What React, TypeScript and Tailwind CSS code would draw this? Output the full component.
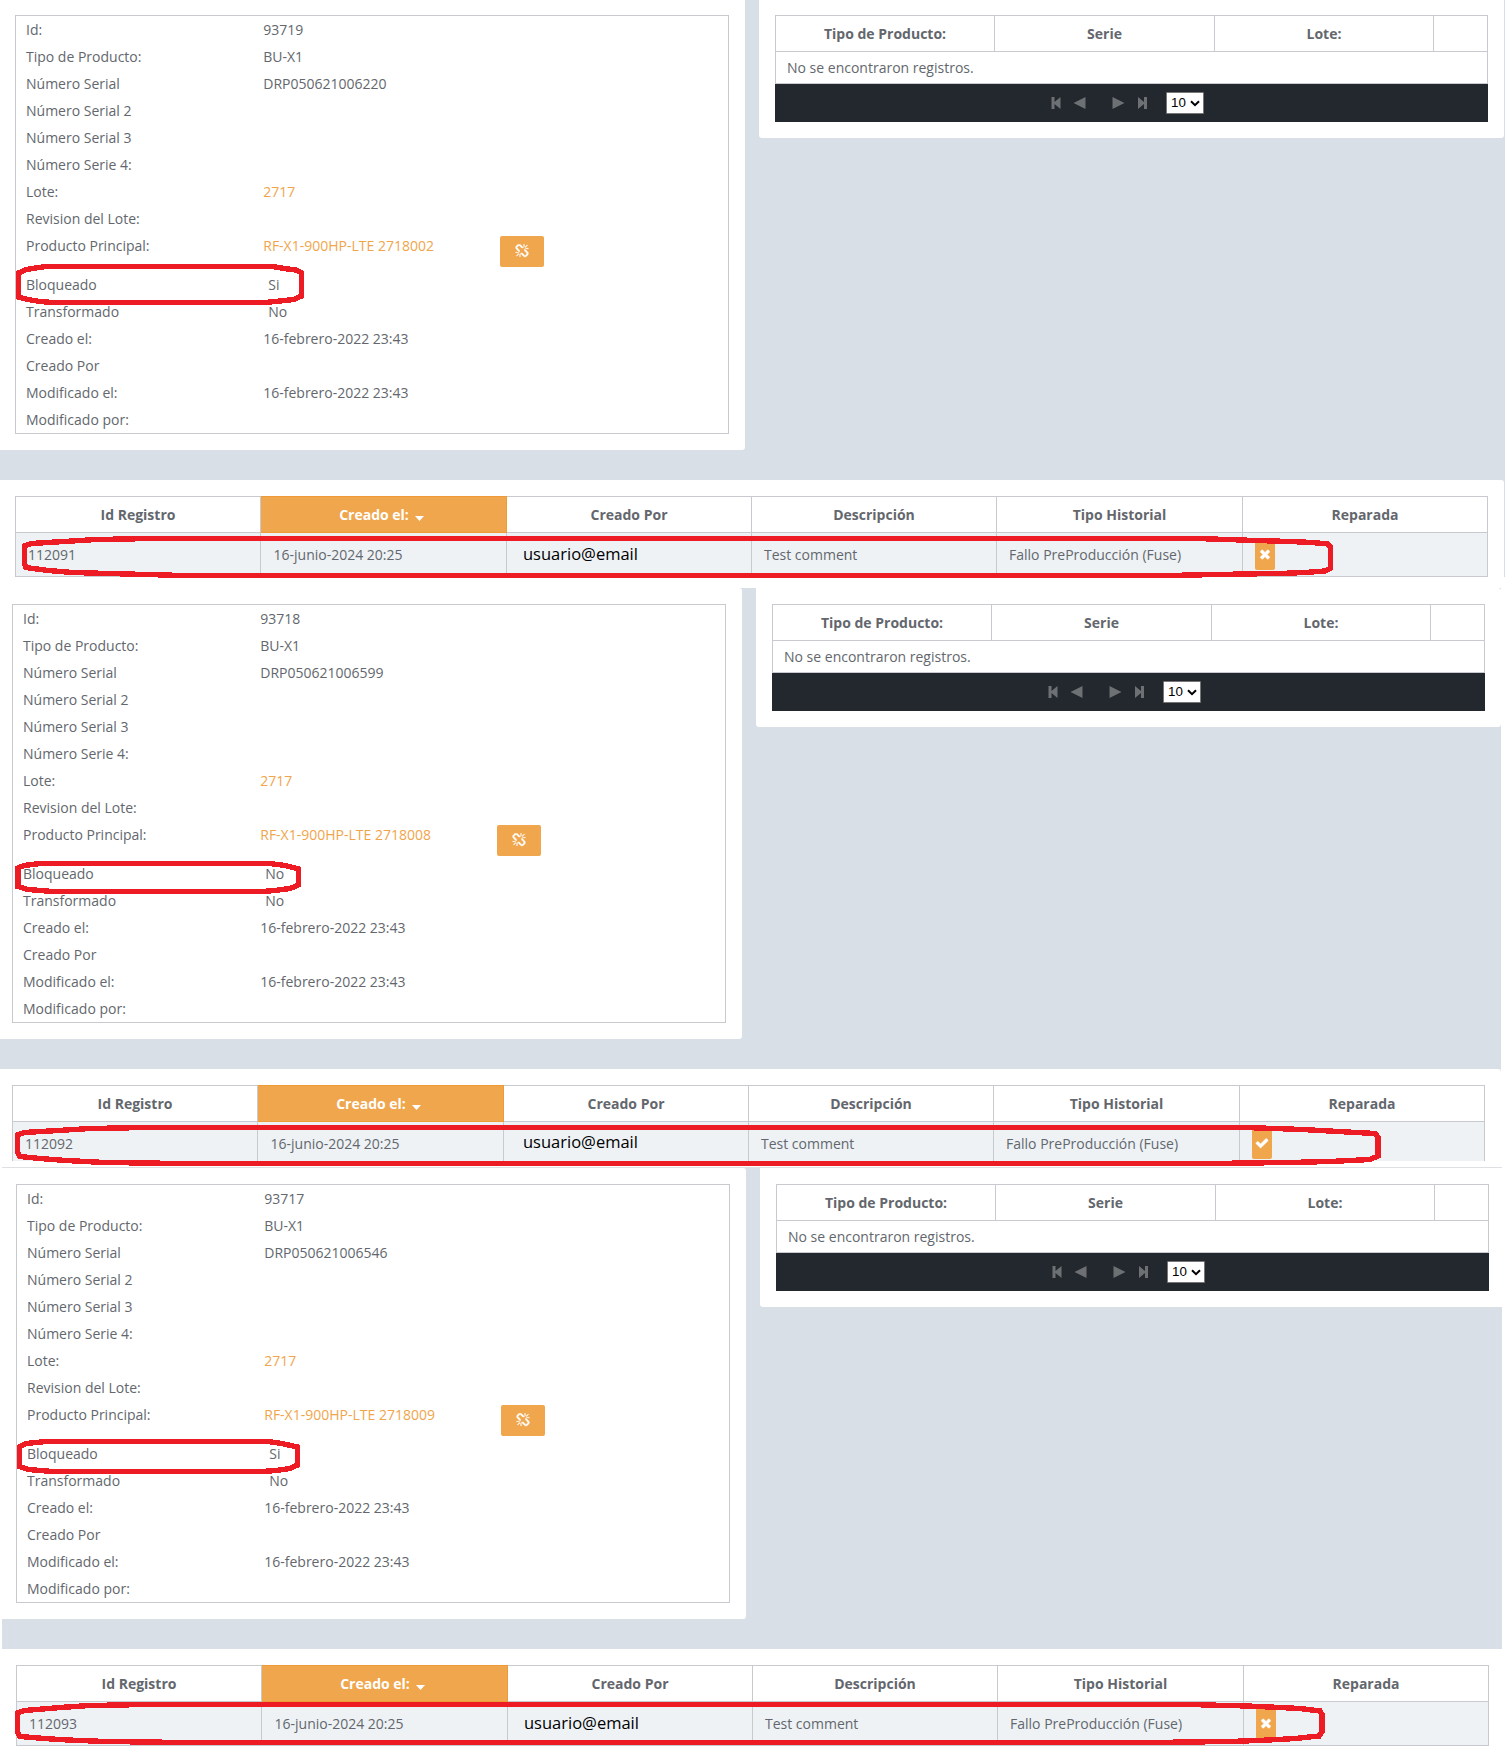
import React from "react";

type RecordData = {
  id: string;
  serial: string;
  product: string;
  blocked: string;
  historyId: string;
  repaired: boolean;
};

const first: RecordData = { id: "93719", serial: "DRP050621006220", product: "RF-X1-900HP-LTE 2718002", blocked: "Si", historyId: "112091", repaired: false };
const second: RecordData = { id: "93718", serial: "DRP050621006599", product: "RF-X1-900HP-LTE 2718008", blocked: "No", historyId: "112092", repaired: true };
const third: RecordData = { id: "93717", serial: "DRP050621006546", product: "RF-X1-900HP-LTE 2718009", blocked: "Si", historyId: "112093", repaired: false };

const TIMES =
  "M1490 1322q0 40-28 68l-136 136q-28 28-68 28t-68-28l-294-294-294 294q-28 28-68 28t-68-28l-136-136q-28-28-28-68t28-68l294-294-294-294q-28-28-28-68t28-68l136-136q28-28 68-28t68 28l294 294 294-294q28-28 68-28t68 28l136 136q28 28 28 68t-28 68l-294 294 294 294q28 28 28 68z";
const CHECK =
  "M1671 566q0 40-28 68l-724 724-136 136q-28 28-68 28t-68-28l-136-136-362-362q-28-28-28-68t28-68l136-136q28-28 68-28t68 28l294 295 656-657q28-28 68-28t68 28l136 136q28 28 28 68z";
const UNLINK =
  "M503 1271l-256 256q-10 9-23 9-12 0-23-9-9-10-9-23t9-23l256-256q10-9 23-9t23 9q9 10 9 23t-9 23zm169 41v320q0 14-9 23t-23 9-23-9-9-23v-320q0-14 9-23t23-9 23 9 9 23zm-224-224q0 14-9 23t-23 9h-320q-14 0-23-9t-9-23 9-23 23-9h320q14 0 23 9t9 23zm1264 128q0 120-85 203l-147 146q-83 83-203 83-121 0-204-85l-334-335q-21-21-42-56l239-18 273 274q28 28 68 28t68-27l147-146q28-28 28-67 0-40-28-68l-274-275 18-239q35 21 56 42l336 336q84 86 84 204zm-617-724l-239 18-273-274q-28-28-68-28-39 0-68 27l-147 146q-28 28-28 67 0 40 28 68l274 274-18 240q-35-21-56-42l-336-336q-84-86-84-204 0-120 85-203l147-146q83-83 203-83 121 0 204 85l334 335q21 21 42 56zm633 84q0 14-9 23t-23 9h-320q-14 0-23-9t-9-23 9-23 23-9h320q14 0 23 9t9 23zm-544-544v320q0 14-9 23t-23 9-23-9-9-23v-320q0-14 9-23t23-9 23 9 9 23zm407 151l-256 256q-11 9-23 9t-23-9q-9-10-9-23t9-23l256-256q10-9 23-9t23 9q9 10 9 23t-9 23z";

function Glyph({ d, bold = false }: { d: string; bold?: boolean }) {
  return (
    <svg viewBox="0 0 1792 1792" className={bold ? "block h-[14px] w-[14px] shrink-0 fill-white stroke-white stroke-[60px]" : "block h-[14px] w-[14px] shrink-0 fill-white"}>
      <path d={d} />
    </svg>
  );
}

function Field({ label, children, indent = false }: { label: string; children?: React.ReactNode; indent?: boolean }) {
  return (
    <div className="flex h-[27px]">
      <div className="w-[237.250px] shrink-0">{label}</div>
      <div className={indent ? "pl-[5px]" : ""}>{children}</div>
    </div>
  );
}

function Details({ r }: { r: RecordData }) {
  return (
    <div className="w-[745px] shrink-0 bg-white pb-[16px] pl-[15px] pt-[15px] rounded-br-[3px]">
      <div className="h-[419px] w-[714px] border border-[#c9cad0] pl-[10px] leading-[27px]">
        <Field label="Id:">{r.id}</Field>
        <Field label="Tipo de Producto:">BU-X1</Field>
        <Field label="Número Serial">{r.serial}</Field>
        <Field label="Número Serial 2" />
        <Field label="Número Serial 3" />
        <Field label="Número Serie 4:" />
        <Field label="Lote:"><span className="text-[#f0a54b]">2717</span></Field>
        <Field label="Revision del Lote:" />
        <div className="flex h-[39px]">
          <div className="w-[237.250px] shrink-0">Producto Principal:</div>
          <div className="w-[236.750px] shrink-0 text-[#f0a54b]">{r.product}</div>
          <button className="mt-[4px] flex h-[31px] w-[44px] items-center justify-center rounded-[2px] bg-[#f0a64d] pb-px">
            <Glyph d={UNLINK} bold />
          </button>
        </div>
        <Field label="Bloqueado" indent>{r.blocked}</Field>
        <Field label="Transformado" indent>No</Field>
        <Field label="Creado el:">16-febrero-2022 23:43</Field>
        <Field label="Creado Por" />
        <Field label="Modificado el:">16-febrero-2022 23:43</Field>
        <Field label="Modificado por:" />
      </div>
    </div>
  );
}

function Pager() {
  return (
    <div className="flex h-[38px] items-center bg-[#23272e] pl-[276px]">
      <svg viewBox="0 0 96 12" className="block h-[12px] w-[96px] fill-[#6e7174]">
        <path d="M0.500 0h3v5l6-5v12l-6-5v5h-3z" />
        <path d="M34.500 0v12l-12-6z" />
        <path d="M61.500 0v12l12-6z" />
        <path d="M96 0h-3v5l-6-5v12l6-5v5h3z" />
      </svg>
      <div className="ml-[19px] flex h-[22px] w-[38px] items-center rounded-[1px] border border-[#767676] bg-white pl-[4px] font-['Liberation_Sans',sans-serif] text-[13.330px] text-black">
        10
        <svg viewBox="0 0 10 7" className="ml-[4px] block h-[7px] w-[10px] shrink-0 fill-none stroke-black stroke-2">
          <path d="M1 1.200l4 4 4-4" />
        </svg>
      </div>
    </div>
  );
}

function Components() {
  return (
    <div className="ml-[14px] w-[745px] shrink-0 rounded-b-[3px] bg-white pb-[16px] pl-[16px] pt-[15px]">
      <div className="w-[713px]">
        <div className="grid h-[37px] grid-cols-[219px_220px_219px_53px] border border-[#c9cad0] text-center font-bold leading-[35px]">
          <div className="border-r border-[#c9cad0]">Tipo de Producto:</div>
          <div className="border-r border-[#c9cad0]">Serie</div>
          <div className="border-r border-[#c9cad0]">Lote:</div>
          <div />
        </div>
        <div className="h-[32px] border-x border-b border-[#c9cad0] pl-[11px] leading-[31px]">No se encontraron registros.</div>
        <Pager />
      </div>
    </div>
  );
}

function History({ r, raised = false }: { r: RecordData; raised?: boolean }) {
  return (
    <div className="mt-[30px] w-[1504px] rounded-tr-[3px] bg-white pb-[15px] pl-[15px] pt-[16px]">
      <div className="w-[1473px] border border-[#c9cad0]">
        <div className="grid h-[36px] grid-cols-[245px_246px_245px_245px_246px_244px] border-b border-[#c9cad0] text-center font-bold leading-[35px]">
          <div className="border-r border-[#c9cad0]">Id Registro</div>
          <div className="-my-px flex justify-center border border-l-0 border-[#ee9a36] bg-[#f0a64d] pr-[4px] text-white">
            Creado el:
            <svg viewBox="0 0 9 5" className="ml-[6px] mt-[19px] block h-[5px] w-[9px] fill-white"><path d="M0 0h9L4.500 5z" /></svg>
          </div>
          <div className="border-r border-[#c9cad0]">Creado Por</div>
          <div className="border-r border-[#c9cad0]">Descripción</div>
          <div className="border-r border-[#c9cad0]">Tipo Historial</div>
          <div>Reparada</div>
        </div>
        <div className="grid h-[43px] grid-cols-[245px_246px_245px_245px_246px_244px] bg-[#eef2f5] leading-[43px]">
          <div className="border-r border-[#c9cad0] pl-[12px]">{r.historyId}</div>
          <div className="border-r border-[#c9cad0] pl-[12.500px]">16-junio-2024 20:25</div>
          <div className={raised ? "border-r border-[#c9cad0] pl-[19px] text-[16.500px] leading-[39px] text-black" : "border-r border-[#c9cad0] pl-[16px] text-[16.500px] leading-[41px] text-black"}>usuario@email</div>
          <div className="border-r border-[#c9cad0] pl-[12px]">Test comment</div>
          <div className="border-r border-[#c9cad0] pl-[12px]">Fallo PreProducción (Fuse)</div>
          <div className="pl-[12px] pt-[6px]">
            <div className="flex h-[31px] w-[20px] items-center justify-center rounded-[2px] bg-[#f0a64d] pb-px">
              <Glyph d={r.repaired ? CHECK : TIMES} bold />
            </div>
          </div>
        </div>
      </div>
    </div>
  );
}

function Report({ r, raised = false, tall = false }: { r: RecordData; raised?: boolean; tall?: boolean }) {
  return (
    <div className="w-[1510px]">
      <div className={tall ? "flex items-start [&>div]:rounded-tr-[3px] [&>div]:pt-[16px]" : "flex items-start"}>
        <Details r={r} />
        <Components />
      </div>
      <History r={r} raised={raised} />
    </div>
  );
}

const marks = [
  "M46 266.500H273L284 268.500L296 270L301.500 273V296L294 299.500L280 301L265 302.500H53L40 301.500L28 299.500L18.500 297V273L26 269.500Z",
  "M40 863.500H270L285 865.500L298.500 869V885L290 888.500L275 890.500L262 891.500H53L28 889.500L18 886.500V868L24 865.500Z",
  "M46 1441.500H268L282 1443.500L297.500 1447V1465L290 1468.500L276 1470.500L262 1471.500H53L28 1469.500L19.500 1466.500V1447L26 1443.500Z",
  "M153 538.500H1197L1256 540.500L1290 541.500L1312 542.500L1328 544L1330.500 547V568L1325 571L1305 572.500L1280 573.500L1243 574L1167 575.500H183L109 573.500L73 572.500L48 570.500L26 567.500L24.500 563V546L31 543.500L64 541.500L96 539.500Z",
  "M147 1127.500H1245L1303 1129.500L1338 1131.500L1375 1133.500L1378 1137V1156L1370 1159.500L1330 1161.500L1289 1162.500L1208 1163.500H183L104 1162.500L66 1160.500L40 1158.500L20 1156.500L17.500 1152V1135L24 1132.500L58 1130.500L90 1128.500Z",
  "M146 1704.500H1189L1247 1706L1280 1707.500L1300 1708.500L1320 1711L1321.800 1714V1732L1319 1736L1295 1738.500L1269 1740L1231 1741.500L1148 1742.500H186L105 1741.500L68 1740L44 1738.500L20 1736.500L17.500 1732V1713L25 1710.500L60 1707.500L90 1705.500Z",
];

export default function App() {
  return (
    <div className="relative h-[1760px] w-[1505px] overflow-hidden bg-white font-['Open_Sans',sans-serif] text-[14px] text-[#63676d]">
      <div className="h-[577px] w-[1505px] overflow-hidden bg-[#d9dfe7]">
        <Report r={first} />
      </div>
      <div className="mt-[11px] h-[573px] w-[1501px] overflow-hidden bg-[#d9dfe7]">
        <div className="-ml-[3px]">
          <Report r={second} raised tall />
        </div>
      </div>
      <div className="ml-[2px] mt-[6px] h-[593px] w-[1500px] overflow-hidden border-t border-[#dddfe2] bg-[#d9dfe7]">
        <div className="-ml-px">
          <Report r={third} tall />
        </div>
      </div>
      <svg viewBox="0 0 1505 1760" className="pointer-events-none absolute left-0 top-0 h-[1760px] w-[1505px] fill-none stroke-[#ed1c24] stroke-[5.400px] [shape-rendering:crispEdges] [stroke-linejoin:miter]">
        {marks.map((d) => (
          <path key={d} d={d} />
        ))}
      </svg>
    </div>
  );
}
